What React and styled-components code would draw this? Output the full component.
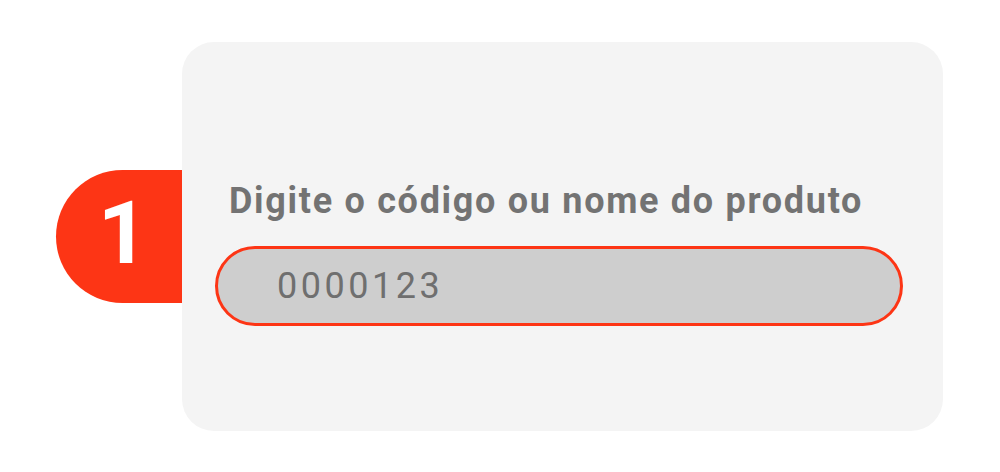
import styled, { createGlobalStyle } from 'styled-components'

const Global = createGlobalStyle`
body {
  margin:0;
  background:#ffffff;
  font-family:'Roboto', 'Liberation Sans', sans-serif;
}
`

const Page = styled.div`
display:flex;
flex-direction:row;
align-items:flex-start;
padding:42px 0 0 56px;
`

const Badge = styled.div`
width:126px;
height:133px;
margin-top:128px;
background-color:#fd3515;
border-radius:67px 0 0 67px;
display:flex;
align-items:center;
justify-content:center;
padding:0 0 8px 8px;
box-sizing:border-box;
color:#ffffff;
font-family:'Roboto', sans-serif;
font-weight:700;
font-size:88px;
line-height:1;
`

const Card = styled.div`
width:761px;
height:389px;
box-sizing:border-box;
background-color:#f4f4f4;
border-radius:32px;
padding:139px 40px 0 33px;
display:flex;
flex-direction:column;
`

const Label = styled.label`
display:block;
padding-left:14px;
margin-bottom:25px;
font-family:'Roboto', sans-serif;
font-weight:700;
font-size:36px;
line-height:40px;
letter-spacing:1.7px;
color:#737373;
white-space:nowrap;
`

const Field = styled.input`
width:688px;
height:80px;
box-sizing:border-box;
border:3px solid #fd3515;
border-radius:40px;
background-color:#cecece;
padding:0 0 0 59px;
font-family:'Roboto', sans-serif;
font-size:36px;
letter-spacing:3.5px;
color:#6f6f6f;
outline:none;
`

export default function App(){
    return (
        <Page>
            <Global />
            <Badge>1</Badge>
            <Card>
                <Label>Digite o código ou nome do produto</Label>
                <Field value="0000123" readOnly />
            </Card>
        </Page>
    )
}
